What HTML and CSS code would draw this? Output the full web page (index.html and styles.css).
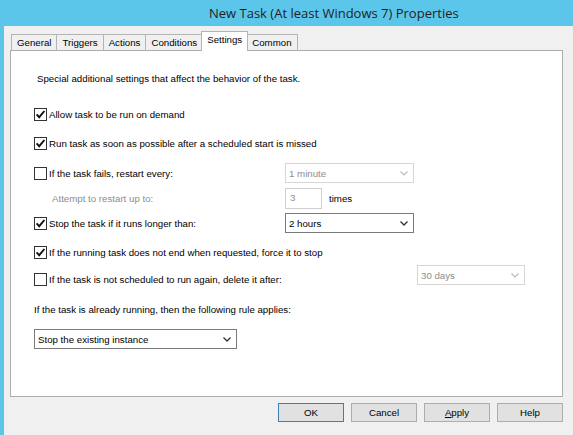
FILE: index.html
```html
<!DOCTYPE html>
<html>
<head>
<meta charset="utf-8">
<link rel="stylesheet" href="styles.css">
</head>
<body>
<div class="window">
  <div class="titlebar"><span class="title">New Task (At least Windows 7) Properties</span></div>
  <div class="client">
    <div class="tabs">
      <div class="tab">General</div>
      <div class="tab">Triggers</div>
      <div class="tab">Actions</div>
      <div class="tab">Conditions</div>
      <div class="tab active">Settings</div>
      <div class="tab">Common</div>
    </div>
    <div class="panel">
      <div class="row intro">Special additional settings that affect the behavior of the task.</div>

      <div class="row r-allow">
        <div class="check"><svg class="box" width="13" height="13" viewBox="0 0 13 13"><rect x="0.5" y="0.5" width="12" height="12" fill="#fff" stroke="#333"/><path d="M2.6 6.4 L5.2 9.2 L10.4 3" fill="none" stroke="#111" stroke-width="1.9"/></svg><span>Allow task to be run on demand</span></div>
      </div>

      <div class="row r-run">
        <div class="check"><svg class="box" width="13" height="13" viewBox="0 0 13 13"><rect x="0.5" y="0.5" width="12" height="12" fill="#fff" stroke="#333"/><path d="M2.6 6.4 L5.2 9.2 L10.4 3" fill="none" stroke="#111" stroke-width="1.9"/></svg><span>Run task as soon as possible after a scheduled start is missed</span></div>
      </div>

      <div class="row r-fail split">
        <div class="check"><svg class="box" width="13" height="13" viewBox="0 0 13 13"><rect x="0.5" y="0.5" width="12" height="12" fill="#fff" stroke="#333"/></svg><span>If the task fails, restart every:</span></div>
        <div class="select disabled w129"><span>1 minute</span><svg width="8" height="5" viewBox="0 0 8 5"><path d="M0.5 0.5 L4 4 L7.5 0.5" fill="none" stroke="#bcbcbc" stroke-width="1.2"/></svg></div>
      </div>

      <div class="row r-attempt split">
        <div class="muted">Attempt to restart up to:</div>
        <div class="spin-wrap"><div class="textbox disabled">3</div><span class="times">times</span></div>
      </div>

      <div class="row r-stop split">
        <div class="check"><svg class="box" width="13" height="13" viewBox="0 0 13 13"><rect x="0.5" y="0.5" width="12" height="12" fill="#fff" stroke="#333"/><path d="M2.6 6.4 L5.2 9.2 L10.4 3" fill="none" stroke="#111" stroke-width="1.9"/></svg><span>Stop the task if it runs longer than:</span></div>
        <div class="select w129"><span>2 hours</span><svg width="8" height="5" viewBox="0 0 8 5"><path d="M0.5 0.5 L4 4 L7.5 0.5" fill="none" stroke="#333" stroke-width="1.3"/></svg></div>
      </div>

      <div class="row r-force">
        <div class="check"><svg class="box" width="13" height="13" viewBox="0 0 13 13"><rect x="0.5" y="0.5" width="12" height="12" fill="#fff" stroke="#333"/><path d="M2.6 6.4 L5.2 9.2 L10.4 3" fill="none" stroke="#111" stroke-width="1.9"/></svg><span>If the running task does not end when requested, force it to stop</span></div>
      </div>

      <div class="row r-delete wide">
        <div class="check"><svg class="box" width="13" height="13" viewBox="0 0 13 13"><rect x="0.5" y="0.5" width="12" height="12" fill="#fff" stroke="#333"/></svg><span>If the task is not scheduled to run again, delete it after:</span></div>
        <div class="select disabled w108"><span>30 days</span><svg width="8" height="5" viewBox="0 0 8 5"><path d="M0.5 0.5 L4 4 L7.5 0.5" fill="none" stroke="#bcbcbc" stroke-width="1.2"/></svg></div>
      </div>

      <div class="row r-rule">If the task is already running, then the following rule applies:</div>

      <div class="row r-instance">
        <div class="select w203"><span>Stop the existing instance</span><svg width="8" height="5" viewBox="0 0 8 5"><path d="M0.5 0.5 L4 4 L7.5 0.5" fill="none" stroke="#333" stroke-width="1.3"/></svg></div>
      </div>
    </div>
    <div class="buttons">
      <div class="btn default">OK</div>
      <div class="btn">Cancel</div>
      <div class="btn"><u>A</u>pply</div>
      <div class="btn">Help</div>
    </div>
  </div>
</div>
</body>
</html>
```
FILE: styles.css
```css
html, body {
  margin: 0;
  padding: 0;
  background: #5cc6ea;
}
.window {
  width: 573px;
  height: 435px;
  background: #5cc6ea;
  padding-left: 4px;
  box-sizing: border-box;
  display: flex;
  flex-direction: column;
  font-family: "Liberation Sans", Arial, sans-serif;
  font-size: 9.7px;
  color: #000;
}
.titlebar {
  height: 26px;
  line-height: 26px;
  padding-left: 205px;
  font-family: "Open Sans", "Liberation Sans", sans-serif;
  font-size: 13px;
  color: #1f1f1f;
  white-space: nowrap;
}
.client {
  flex: 1;
  background: #f0f0f0;
  padding: 6px 10px 0 6px;
  display: flex;
  flex-direction: column;
}
.tabs {
  display: flex;
  align-items: flex-end;
  height: 18px;
  padding-left: 1px;
}
.tab {
  height: 15px;
  line-height: 15px;
  padding: 0 5px;
  border: 1px solid #b4b4b4;
  border-bottom: none;
  margin-right: -1px;
  background: #f0f0f0;
  font-size: 9.7px;
  white-space: nowrap;
}
.tab.active {
  height: 19px;
  line-height: 16px;
  margin-bottom: -1px;
  background: #fff;
  position: relative;
  z-index: 1;
  padding: 0 5px;
  margin-left: -1px;
  margin-right: -2px;
}
.panel {
  height: 345px;
  background: #fff;
  border: 1px solid #adadad;
  padding-left: 23px;
}
.row {
  display: flex;
  align-items: center;
  height: 20px;
  white-space: nowrap;
}
.split > :first-child { width: 251px; }
.wide > :first-child { width: 383px; }
.check {
  display: flex;
  align-items: center;
  gap: 1px;
}
.box { flex: none; margin-right: 1px; }
.intro { margin-top: 17px; padding-left: 3px; }
.r-allow { margin-top: 16px; }
.r-run { margin-top: 9px; }
.r-fail { margin-top: 10px; }
.r-attempt { margin-top: 5px; height: 21px; }
.r-stop { margin-top: 4px; }
.r-force { margin-top: 9px; }
.r-delete { margin-top: 3px; height: 30px; align-items: flex-start; }
.r-delete .check { margin-top: 8px; }
.r-rule { margin-top: 4px; }
.r-instance { margin-top: 10px; }
.muted {
  color: #8d8d8d;
  padding-left: 18px;
  box-sizing: border-box;
}
.spin-wrap { display: flex; align-items: center; }
.textbox {
  width: 37px;
  height: 21px;
  box-sizing: border-box;
  border: 1px solid #cfcfcf;
  background: #fff;
  padding: 3px 0 0 4px;
  color: #8d8d8d;
}
.times { margin-left: 7px; }
.select {
  height: 20px;
  box-sizing: border-box;
  border: 1px solid #7a7a7a;
  background: #fff;
  display: flex;
  align-items: center;
  justify-content: space-between;
  padding: 0 5px 0 3px;
}
.select.disabled {
  border-color: #d6d6d6;
  color: #8d8d8d;
}
.w129 { width: 129px; }
.w108 { width: 108px; }
.w203 { width: 203px; }
.buttons {
  display: flex;
  justify-content: flex-end;
  gap: 7px;
  margin-top: 6px;
}
.btn {
  width: 66px;
  height: 19px;
  box-sizing: border-box;
  border: 1px solid #adadad;
  background: #e1e1e1;
  text-align: center;
  line-height: 17px;
}
.btn.default {
  border-color: #3c7fb1;
}
```
